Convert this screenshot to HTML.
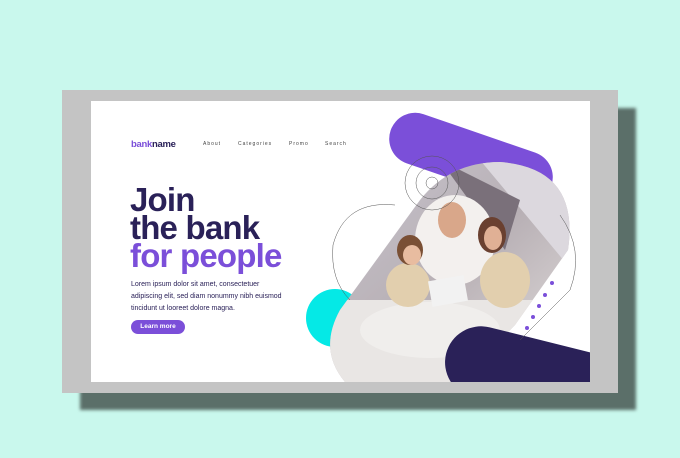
<!DOCTYPE html>
<html><head><meta charset="utf-8"><style>
html,body{margin:0;padding:0}
body{width:680px;height:458px;background:#c9f8ed;position:relative;overflow:hidden;font-family:"Liberation Sans",sans-serif}
.shadow{position:absolute;left:80px;top:108px;width:556px;height:302px;background:#5b6f69;filter:blur(1.5px)}
.frame{position:absolute;left:62px;top:90px;width:556px;height:303px;background:#c4c4c4}
.card{position:absolute;left:91px;top:101px;width:499px;height:281px;background:#fff;overflow:hidden}
.logo{position:absolute;left:40px;top:38px;font-size:9.5px;font-weight:bold;letter-spacing:-0.3px;color:#2a2158}
.logo span{color:#7b4fd9}
.nav{position:absolute;top:40px;font-size:5px;letter-spacing:1px;color:#444}
h1{position:absolute;left:39px;top:85px;margin:0;font-size:33px;line-height:28px;font-weight:bold;letter-spacing:-0.8px;color:#2a2158}
h1 span{color:#7b4fd9}
.p{position:absolute;left:40px;top:178px;font-size:7px;line-height:12px;color:#2a2158}
.btn{position:absolute;left:40px;top:219px;width:54px;height:14px;border-radius:7px;background:#7b4fd9;color:#fff;font-size:6.5px;font-weight:bold;text-align:center;line-height:14px}
svg{position:absolute;left:0;top:0}
</style></head><body>
<div class="shadow"></div>
<div class="frame"></div>
<div class="card">
<svg width="499" height="281" viewBox="91 101 499 281">
<defs>
<linearGradient id="g" x1="0" y1="0" x2="1" y2="1">
<stop offset="0" stop-color="#c9c6d0"/><stop offset="0.5" stop-color="#b8b0b5"/><stop offset="1" stop-color="#e8e4e2"/></linearGradient>
<clipPath id="c"><path d="M420 200 Q450 162 500 162 Q580 168 568 250 L515 325 L460 382 L345 382 Q318 350 340 310 Z"/></clipPath>
</defs>
<rect x="386" y="132" width="170" height="52" rx="26" fill="#7b4fd9" transform="rotate(19 471 158)"/>
<circle cx="335" cy="318" r="29" fill="#05e9e6"/>
<g clip-path="url(#c)">
<rect x="320" y="150" width="270" height="240" fill="url(#g)"/>
<path d="M480 160 L580 280 L580 160 Z" fill="#dcd8de"/>
<path d="M440 160 L505 250 L520 200 Z" fill="#7a707a"/>
<rect x="320" y="300" width="270" height="90" fill="#e9e6e4"/>
<ellipse cx="455" cy="240" rx="40" ry="45" fill="#f3f0ee"/>
<ellipse cx="430" cy="330" rx="70" ry="28" fill="#f0eeec"/>
<ellipse cx="408" cy="285" rx="22" ry="22" fill="#e2cfae"/>
<ellipse cx="505" cy="280" rx="25" ry="28" fill="#e2cfae"/>
<ellipse cx="452" cy="220" rx="14" ry="18" fill="#d9a78a"/>
<ellipse cx="492" cy="235" rx="14" ry="18" fill="#6a4030"/>
<ellipse cx="493" cy="238" rx="9" ry="12" fill="#e0b095"/>
<ellipse cx="410" cy="250" rx="13" ry="15" fill="#7a5035"/>
<ellipse cx="412" cy="255" rx="9" ry="10" fill="#e8bca0"/>
<rect x="430" y="278" width="36" height="26" fill="#f2f2f2" transform="rotate(-10 448 291)"/>
</g>
<rect x="443" y="343" width="210" height="72" rx="36" fill="#2a2158" transform="rotate(14 548 379)"/>
<g fill="none" stroke="#555" stroke-width="0.5">
<circle cx="432" cy="183" r="27"/><circle cx="432" cy="183" r="16"/><circle cx="432" cy="183" r="6"/>
<path d="M395 205 Q345 200 333 245 Q330 280 350 300"/>
<path d="M560 215 Q585 250 570 290 L520 340"/>
</g>
<g fill="#7b4fd9"><circle cx="552" cy="283" r="2"/><circle cx="545" cy="295" r="2"/><circle cx="539" cy="306" r="2"/><circle cx="533" cy="317" r="2"/><circle cx="527" cy="328" r="2"/></g>
</svg>
<div class="logo"><span>bank</span>name</div>
<div class="nav" style="left:112px">About</div>
<div class="nav" style="left:147px">Categories</div>
<div class="nav" style="left:198px">Promo</div>
<div class="nav" style="left:234px">Search</div>
<h1>Join<br>the bank<br><span>for people</span></h1>
<div class="p">Lorem ipsum dolor sit amet, consectetuer<br>adipiscing elit, sed diam nonummy nibh euismod<br>tincidunt ut looreet dolore magna.</div>
<div class="btn">Learn more</div>
</div>
</body></html>
